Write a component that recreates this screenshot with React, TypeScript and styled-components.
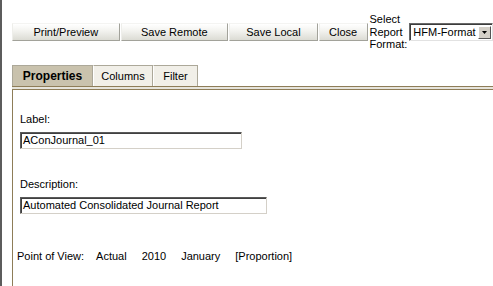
import React from "react";
import styled, { createGlobalStyle } from "styled-components";

const GlobalStyle = createGlobalStyle`
  html, body {
    height: 100%;
  }
  body {
    margin: 0;
    overflow: hidden;
    background: #ffffff;
    font-family: "Liberation Sans", Arial, sans-serif;
    font-size: 11px;
    color: #000000;
  }
`;

const Page = styled.div`
  display: flex;
  flex-direction: column;
  height: 100vh;
  box-sizing: border-box;
  border-left: 2px solid #5c5c5c;
  padding: 13px 0 0 10px;
`;

const Toolbar = styled.div`
  display: flex;
  align-items: center;
  gap: 1px;
  height: 38px;
`;

const ToolButton = styled.button<{ $width: number }>`
  box-sizing: border-box;
  width: ${(p) => p.$width}px;
  height: 18px;
  padding: 0;
  font-family: "Liberation Sans", Arial, sans-serif;
  font-size: 11px;
  color: #000000;
  background: linear-gradient(#ffffff, #f2f2ee 45%, #dcdcd4);
  border: 1px solid;
  border-color: #f4f4f2 #a2a29a #a2a29a #eeeeea;
  border-radius: 0;
`;

const FormatLabel = styled.div`
  width: 39px;
  margin-left: 1px;
  line-height: 12.5px;
`;

const SelectBox = styled.div`
  box-sizing: border-box;
  display: flex;
  align-items: center;
  width: 84px;
  height: 18px;
  border: 1px solid;
  border-color: #6a6a6a #e2e2e2 #e2e2e2 #6a6a6a;
  box-shadow: inset 1px 1px 0 #3c3c3c;
  padding-left: 3px;
  font-size: 11px;
`;

const SelectValue = styled.span`
  flex: 1;
  white-space: nowrap;
  overflow: hidden;
`;

const ArrowButton = styled.span`
  box-sizing: border-box;
  display: flex;
  align-items: center;
  justify-content: center;
  width: 13px;
  height: 13px;
  margin-right: 1px;
  background: #d4d0c8;
  border: 1px solid;
  border-color: #ffffff #555555 #555555 #ffffff;
`;

const TabRow = styled.div`
  display: flex;
  margin-top: 14px;
  height: 21px;
`;

const Tab = styled.div<{ $active?: boolean; $width: number }>`
  box-sizing: border-box;
  width: ${(p) => p.$width}px;
  display: flex;
  align-items: center;
  justify-content: center;
  font-size: ${(p) => (p.$active ? 12 : 11)}px;
  font-weight: ${(p) => (p.$active ? 700 : 400)};
  background: ${(p) => (p.$active ? "#c9c2ad" : "#f1efe8")};
  border: 1px solid #aca899;
  border-bottom: none;
  border-left-color: ${(p) => (p.$active ? "#aca899" : "#ffffff")};
  padding-bottom: 1px;
`;

const TabBar = styled.div`
  flex: none;
  height: 2px;
  border-top: 1px solid #8e7d58;
  border-bottom: 1px solid #8e7d58;
  background: #e6e4dc;
`;

const Panel = styled.div`
  flex: 1;
  border-left: 1px solid #8e7d58;
  padding: 23px 0 0 7px;
`;

const FieldLabel = styled.div`
  line-height: 13px;
`;

const TextInput = styled.div<{ $width: number }>`
  box-sizing: border-box;
  width: ${(p) => p.$width}px;
  height: 17px;
  margin-top: 6px;
  padding-left: 2px;
  line-height: 14px;
  white-space: nowrap;
  border: 1px solid;
  border-color: #5a5a5a #d4d0c8 #d4d0c8 #5a5a5a;
  box-shadow: inset 1px 1px 0 #404040;
`;

const Field = styled.div<{ $gap: number }>`
  margin-top: ${(p) => p.$gap}px;
`;

const PovRow = styled.div`
  display: flex;
  gap: 15px;
  margin-top: 36px;
  margin-left: -3px;
  line-height: 13px;
`;

const PovLabel = styled.span`
  margin-right: -3px;
`;

const povValues = ["Actual", "2010", "January", "[Proportion]"];

export default function App() {
  return (
    <>
      <GlobalStyle />
      <Page>
        <Toolbar>
          <ToolButton $width={108}>Print/Preview</ToolButton>
          <ToolButton $width={108}>Save Remote</ToolButton>
          <ToolButton $width={89}>Save Local</ToolButton>
          <ToolButton $width={49}>Close</ToolButton>
          <FormatLabel>
            Select
            <br />
            Report
            <br />
            Format:
          </FormatLabel>
          <SelectBox>
            <SelectValue>HFM-Format</SelectValue>
            <ArrowButton>
              <svg width="5" height="3" viewBox="0 0 5 3">
                <polygon points="0,0 5,0 2.5,3" fill="#000" />
              </svg>
            </ArrowButton>
          </SelectBox>
        </Toolbar>

        <TabRow>
          <Tab $active $width={81}>
            Properties
          </Tab>
          <Tab $width={60}>Columns</Tab>
          <Tab $width={45}>Filter</Tab>
        </TabRow>
        <TabBar />

        <Panel>
          <FieldLabel>Label:</FieldLabel>
          <TextInput $width={222}>AConJournal_01</TextInput>
          <Field $gap={29}>
            <FieldLabel>Description:</FieldLabel>
            <TextInput $width={247}>Automated Consolidated Journal Report</TextInput>
          </Field>
          <PovRow>
            <PovLabel>Point of View:</PovLabel>
            {povValues.map((v) => (
              <span key={v}>{v}</span>
            ))}
          </PovRow>
        </Panel>
      </Page>
    </>
  );
}
